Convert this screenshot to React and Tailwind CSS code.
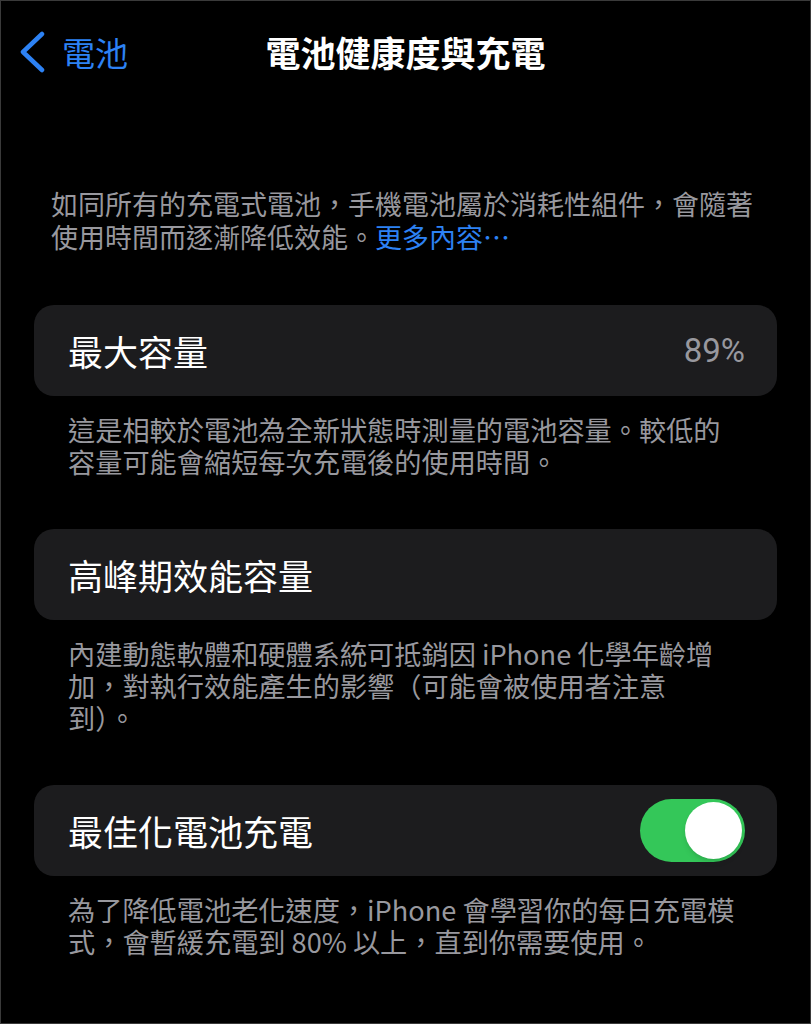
import { useState } from "react";

const sections = [
  {
    title: "最大容量",
    value: "89%",
    note: ["這是相較於電池為全新狀態時測量的電池容量。較低的", "容量可能會縮短每次充電後的使用時間。"],
  },
  {
    title: "高峰期效能容量",
    note: ["內建動態軟體和硬體系統可抵銷因 iPhone 化學年齡增", "加，對執行效能產生的影響（可能會被使用者注意", "到）。"],
  },
  {
    title: "最佳化電池充電",
    toggle: true,
    note: ["為了降低電池老化速度，iPhone 會學習你的每日充電模", "式，會暫緩充電到 80% 以上，直到你需要使用。"],
  },
];

function Toggle({ on, onChange }) {
  return (
    <button
      onClick={() => onChange(!on)}
      className={`w-[105px] h-[63px] rounded-full p-[3px] flex items-center ${
        on ? "bg-[#34c759] justify-end" : "bg-[#39393d] justify-start"
      }`}
    >
      <span className="block w-[57px] h-[57px] rounded-full bg-white shadow-md" />
    </button>
  );
}

export default function App() {
  const [optimized, setOptimized] = useState(true);

  return (
    <div className="w-[811px] h-[1024px] bg-black border border-[#3a3a3a] overflow-hidden font-['Noto_Sans_CJK_TC','Noto_Sans',sans-serif]">
      {/* header */}
      <div className="relative h-[101px] flex items-center justify-center">
        <button className="absolute left-[17px] top-[30px] flex items-center gap-[14px] text-[#2d82f4]">
          <svg width="30" height="42" viewBox="0 0 30 42" fill="none">
            <path d="M24 3 L5 21 L24 39" stroke="currentColor" strokeWidth="4.5" strokeLinecap="round" strokeLinejoin="round" />
          </svg>
          <span className="text-[33px] leading-[42px]">電池</span>
        </button>
        <h1 className="text-white text-[35px] font-bold leading-[42px] mt-[1px]">電池健康度與充電</h1>
      </div>

      {/* intro */}
      <p className="mt-[85px] px-[50px] text-[27px] leading-[33px] text-[#98989e] whitespace-nowrap">
        <span className="block">如同所有的充電式電池，手機電池屬於消耗性組件，會隨著</span>
        <span className="block">
          使用時間而逐漸降低效能。<span className="text-[#2d82f4]">更多內容⋯</span>
        </span>
      </p>

      {sections.map((s) => (
        <div key={s.title} className="mt-[52px]">
          <div className="mx-[33px] h-[91px] rounded-[20px] bg-[#1c1c1e] flex items-center justify-between pl-[34px] pr-[32px]">
            <span className="text-white text-[35px] leading-none">{s.title}</span>
            {s.value && (
              <span className="text-[#98989e] text-[33px] leading-none font-['Roboto',sans-serif]">{s.value}</span>
            )}
            {s.toggle && <Toggle on={optimized} onChange={setOptimized} />}
          </div>
          <p className="mt-[17px] px-[67px] text-[27.2px] leading-[32px] text-[#98989e] whitespace-nowrap">
            {s.note.map((line) => (
              <span key={line} className="block">
                {line}
              </span>
            ))}
          </p>
        </div>
      ))}
    </div>
  );
}
